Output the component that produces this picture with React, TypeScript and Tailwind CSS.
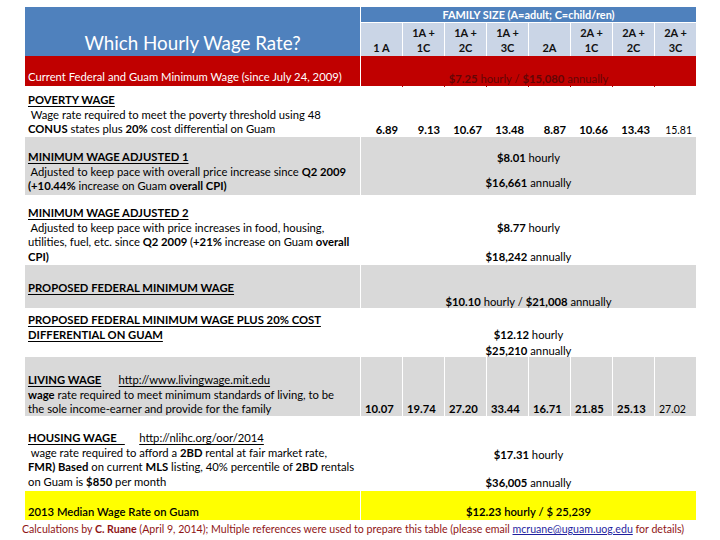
import React from "react";

const GRID = "grid grid-cols-[335px_repeat(8,41px)] gap-x-px";
const T = "text-[11.25px] leading-[14.5px] whitespace-nowrap";

const heads: [string, string][] = [
  ["", "1 A"],
  ["1A +", "1C"],
  ["1A +", "2C"],
  ["1A +", "3C"],
  ["", "2A"],
  ["2A +", "1C"],
  ["2A +", "2C"],
  ["2A +", "3C"],
];

const poverty = ["6.89", "9.13", "10.67", "13.48", "8.87", "10.66", "13.43", "15.81"];
const living = ["10.07", "19.74", "27.20", "33.44", "16.71", "21.85", "25.13", "27.02"];

function B({ children }: { children: React.ReactNode }) {
  return <span className="font-bold">{children}</span>;
}

function Label({ children }: { children: React.ReactNode }) {
  return <span className="font-bold underline underline-offset-[2px]">{children}</span>;
}

export default function App() {
  return (
    <div className="w-[720px] h-[540px] bg-white font-['Lato',sans-serif] text-black overflow-hidden">
      <div className="ml-[25px] pt-[7px] w-[671px]">
        {/* Header */}
        <div className={`${GRID} grid-rows-[15px_33px] gap-y-px`}>
          <div className="row-span-2 bg-[#4f81bd] text-white text-[18.8px] leading-[22px] flex items-end justify-center pb-[2px]">
            Which Hourly Wage Rate?
          </div>
          <div className="col-span-8 bg-[#4f81bd] text-white text-[10.9px] font-bold flex items-center justify-center leading-[15px]">
            FAMILY SIZE (A=adult; C=child/ren)
          </div>
          {heads.map(([a, b], i) => (
            <div
              key={i}
              className="bg-[#cad5e6] text-[11px] font-bold leading-[15px] text-[#111] flex flex-col items-center justify-end pb-[1px]"
            >
              <span>{a}</span>
              <span>{b}</span>
            </div>
          ))}
        </div>

        {/* Current minimum wage */}
        <div className={`${GRID} h-[30px]`}>
          <div className={`bg-[#c00000] text-white ${T} pt-[14px] pl-[3px]`}>
            Current Federal and Guam Minimum Wage (since July 24, 2009)
          </div>
          <div className={`col-span-8 bg-[#c00000] text-[#640606] ${T} pt-[16px] text-center`}>
            <B>$7.25</B> hourly / <B>$15,080</B> annually
          </div>
        </div>

        {/* Poverty wage */}
        <div className={`${GRID} h-[51px]`}>
          <div className={`bg-white ${T} pt-[7px] pl-[3px]`}>
            <Label>POVERTY WAGE</Label>
            <div>&nbsp;Wage rate required to meet the poverty threshold using 48</div>
            <div>
              <B>CONUS</B> states plus <B>20%</B> cost differential on Guam
            </div>
          </div>
          {poverty.map((n, i) => (
            <div
              key={i}
              className={`bg-white text-right pr-[4px] pt-[37px] leading-[14.5px] ${
                i === 7 ? "text-[10.5px] font-normal" : "text-[11.25px] font-bold"
              }`}
            >
              {n}
            </div>
          ))}
        </div>

        {/* Min wage adjusted 1 */}
        <div className={`${GRID} h-[58px]`}>
          <div className={`bg-[#d9d9d9] ${T} pt-[13px] pl-[3px]`}>
            <Label>MINIMUM WAGE ADJUSTED 1</Label>
            <div>
              &nbsp;Adjusted to keep pace with overall price increase since <B>Q2 2009</B>
            </div>
            <div>
              <B>(+10.44%</B> increase on Guam <B>overall CPI)</B>
            </div>
          </div>
          <div className={`col-span-8 bg-[#d9d9d9] ${T} pt-[14px] text-center`}>
            <div>
              <B>$8.01</B> hourly
            </div>
            <div className="mt-[10.5px]">
              <B>$16,661</B> annually
            </div>
          </div>
        </div>

        {/* Min wage adjusted 2 */}
        <div className={`${GRID} h-[70px]`}>
          <div className={`bg-white ${T} pt-[11px] pl-[3px]`}>
            <Label>MINIMUM WAGE ADJUSTED 2</Label>
            <div>&nbsp;Adjusted to keep pace with price increases in food, housing,</div>
            <div>
              utilities, fuel, etc. since <B>Q2 2009</B> (<B>+21%</B> increase on Guam <B>overall</B>
            </div>
            <div>
              <B>CPI)</B>
            </div>
          </div>
          <div className={`col-span-8 bg-white ${T} pt-[26px] text-center`}>
            <div>
              <B>$8.77</B> hourly
            </div>
            <div className="mt-[14.5px]">
              <B>$18,242</B> annually
            </div>
          </div>
        </div>

        {/* Proposed federal */}
        <div className={`${GRID} h-[43px]`}>
          <div className={`bg-[#d9d9d9] ${T} pt-[16px] pl-[3px]`}>
            <Label>PROPOSED FEDERAL MINIMUM WAGE</Label>
          </div>
          <div className={`col-span-8 bg-[#d9d9d9] ${T} pt-[30px] text-center`}>
            <B>$10.10</B> hourly / <B>$21,008</B> annually
          </div>
        </div>

        {/* Proposed + 20% */}
        <div className={`${GRID} h-[49px]`}>
          <div className={`bg-white ${T} pt-[5px] pl-[3px]`}>
            <Label>PROPOSED FEDERAL MINIMUM WAGE PLUS 20% COST </Label>
            <div>
              <Label>DIFFERENTIAL ON GUAM </Label>
            </div>
          </div>
          <div className="col-span-8 bg-white text-[11.25px] leading-[15.5px] pt-[19px] text-center">
            <div>
              <B>$12.12</B> hourly
            </div>
            <div>
              <B>$25,210</B> annually
            </div>
          </div>
        </div>

        {/* Living wage */}
        <div className={`${GRID} h-[59px]`}>
          <div className={`bg-[#d9d9d9] ${T} pt-[16px] pl-[3px]`}>
            <div className="whitespace-pre">
              <Label>LIVING WAGE</Label>
              {"      "}
              <span className="underline underline-offset-[2px]">http://www.livingwage.mit.edu</span>
            </div>
            <div>
              <B>wage</B> rate required to meet minimum standards of living, to be
            </div>
            <div>the sole income-earner and provide for the family</div>
          </div>
          {living.map((n, i) => (
            <div
              key={i}
              className={`bg-[#d9d9d9] text-left pl-[4px] pt-[45px] leading-[14.5px] ${
                i === 7 ? "text-[10.5px] font-normal" : "text-[11.25px] font-bold"
              }`}
            >
              {n}
            </div>
          ))}
        </div>

        {/* Housing wage */}
        <div className={`${GRID} h-[75px]`}>
          <div className={`bg-white ${T} pt-[15px] pl-[3px]`}>
            <div className="whitespace-pre">
              <Label>HOUSING WAGE   </Label>
              {"     "}
              <span className="underline underline-offset-[2px]">http://nlihc.org/oor/2014</span>
            </div>
            <div>
              &nbsp;wage rate required to afford a <B>2BD</B> rental at fair market rate,
            </div>
            <div>
              <B>FMR) Based</B> on current <B>MLS</B> listing, 40% percentile of <B>2BD</B> rentals
            </div>
            <div>
              on Guam is <B>$850</B> per month
            </div>
          </div>
          <div className={`col-span-8 bg-white ${T} pt-[32px] text-center`}>
            <div>
              <B>$17.31</B> hourly
            </div>
            <div className="mt-[13.5px]">
              <B>$36,005</B> annually
            </div>
          </div>
        </div>

        {/* Median */}
        <div className={`${GRID} h-[28px]`}>
          <div className={`bg-[#ffff00] ${T} pt-[14px] pl-[3px] font-semibold`}>
            2013 Median Wage Rate on Guam
          </div>
          <div className={`col-span-8 bg-[#ffff00] ${T} pt-[14px] text-center font-semibold`}>
            <B>$12.23</B> hourly / $ 25,239
          </div>
        </div>
      </div>

      {/* Footer */}
      <div className="pl-[22px] mt-[3px] text-[10.6px] leading-[14px] text-[#8f1515] whitespace-nowrap">
        Calculations by <B>C. Ruane</B> (April 9, 2014); Multiple references were used to prepare this table (please
        email <span className="text-[#1f1f9f] underline">mcruane@uguam.uog.edu</span> for details)
      </div>
    </div>
  );
}
